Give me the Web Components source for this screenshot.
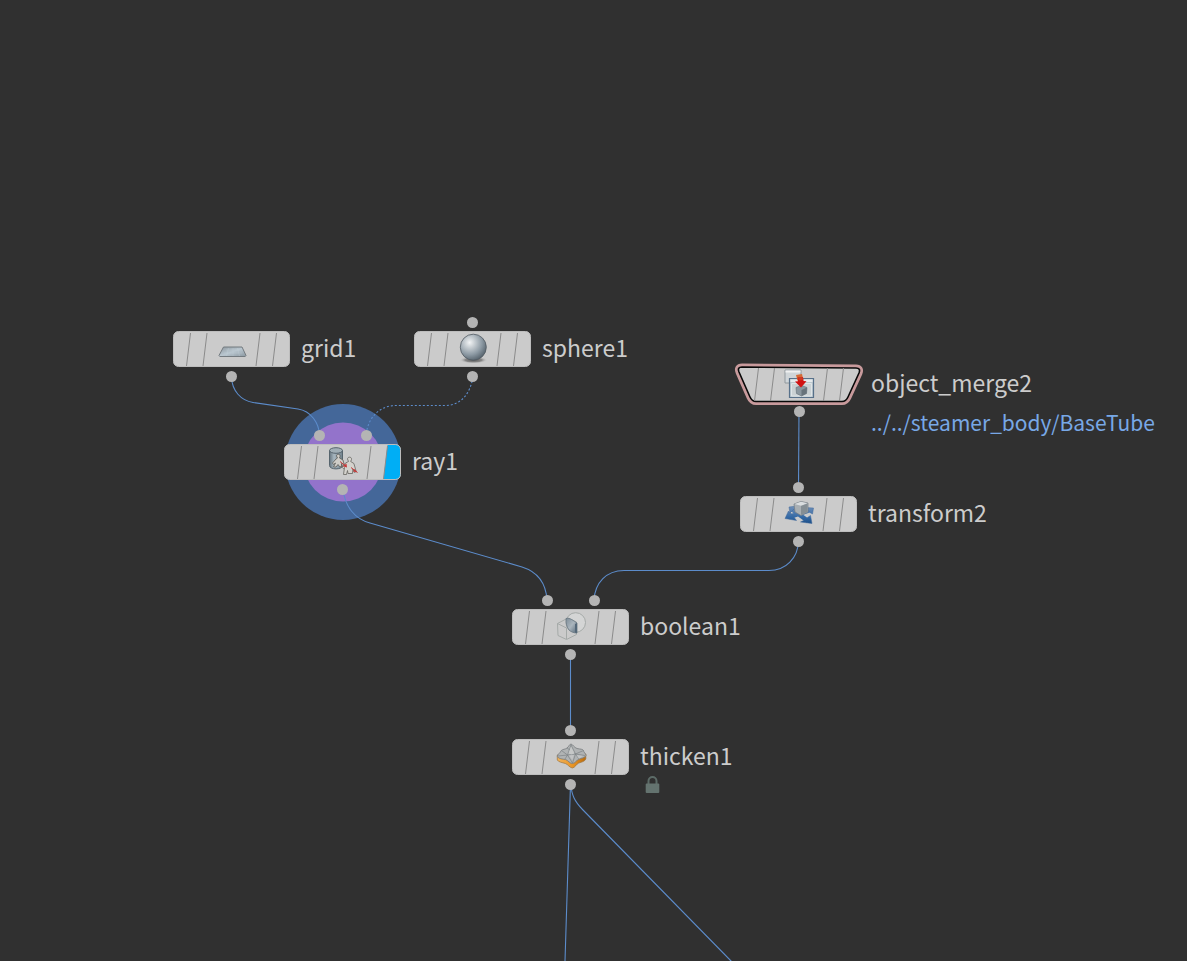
<!DOCTYPE html>
<html lang="en">
<head>
<meta charset="utf-8">
<title>Network editor</title>
<style>
html, body { margin: 0; min-height: 100vh; background: #303030; }
body { overflow: hidden; font-family: "Noto Sans CJK SC", "Noto Sans", sans-serif; color: #cccccc; }
graph-node { position: absolute; }
</style>
</head>
<body>
<node-canvas>
  <graph-wires></graph-wires>
  <graph-node style="left:173px;top:331px" inputs="0" icon="grid">grid1</graph-node>
  <graph-node style="left:414px;top:331px" inputs="1" icon="sphere">sphere1</graph-node>
  <graph-node style="left:284px;top:444px" inputs="2" icon="ray" display>ray1</graph-node>
  <graph-node style="left:735px;top:363px" inputs="0" icon="merge" shape="trapezoid">object_merge2<span slot="note">../../steamer_body/BaseTube</span></graph-node>
  <graph-node style="left:740px;top:496px" inputs="1" icon="transform">transform2</graph-node>
  <graph-node style="left:512px;top:609px" inputs="2" icon="boolean">boolean1</graph-node>
  <graph-node style="left:512px;top:739px" inputs="1" icon="thicken">thicken1<lock-badge slot="note"></lock-badge></graph-node>
</node-canvas>

<script>
const ICONS = {
  grid: `<defs><linearGradient id="g" x2="1" y2="1"><stop stop-color="#8d979e"/><stop offset=".5" stop-color="#b9c6cf"/><stop offset="1" stop-color="#8b98a1"/></linearGradient></defs>
    <path d="M7.5 13H26l4 8.5-.8 1H3.8L3 21.5z" fill="url(#g)" stroke="#737a7f"/><path d="M10 16h14M8 19h18M12.500 14l-2 8M17 14v8M21.500 14l2 8" stroke="#c6d2da" stroke-width=".5" opacity=".6"/>`,
  sphere: `<defs><radialGradient id="g" cx=".36" cy=".32" r=".72"><stop stop-color="#f2f4f5"/><stop offset=".3" stop-color="#c3cacf"/><stop offset=".65" stop-color="#8d9aa4"/><stop offset="1" stop-color="#56636d"/></radialGradient>
    <radialGradient id="s"><stop stop-color="#555"/><stop offset=".6" stop-color="#777" stop-opacity=".8"/><stop offset="1" stop-color="#ccc" stop-opacity="0"/></radialGradient></defs>
    <ellipse cx="16.500" cy="26" rx="14" ry="3.500" fill="url(#s)"/><circle cx="16.300" cy="13.200" r="13" fill="url(#g)" stroke="#525b62" stroke-width=".8"/>`,
  ray: `<defs><linearGradient id="g"><stop stop-color="#66757f"/><stop offset=".35" stop-color="#a7b6bf"/><stop offset="1" stop-color="#71818c"/></linearGradient></defs>
    <path d="M2.500 3.500v15c0 4.500 13 4.500 13 0v-15z" fill="url(#g)" stroke="#56646d"/><ellipse cx="9" cy="3.500" rx="6.500" ry="2.800" fill="#a1afb6" stroke="#56646d"/>
    <path d="M9.500 9c0-2.500 4-2.500 3.500.500l-.5 1.500 3.500 2 1.500 6-2 .5-1-3 .2 3.500-2.200-.5-1.500-2-2 2.500-2.500 0 2-4-2 1.500-1-1.500 3.500-4 1.500-1z" fill="#cfcdc8" stroke="#5b5a55" stroke-width=".8"/>
    <path d="M20.500 12c0-2.500 4.500-2.500 4 .5l-.8 2 3.200 2 2.300 8-1.800 1-1.500-3.500-.4 4.500h-4.500l-.5-3-1 4h-3l1-7-1 1.200-1.200-1.200 3.200-4.500 3-1.500z" fill="#d4d2cd" stroke="#66655f" stroke-width=".8"/>
    <path d="M13 14.500l5.500 4.500M24 20.500l6.500 5" stroke="#c43a3a" stroke-width="1"/><path d="M19.500 16.500l.5 4-4.300-1.200zM27.500 22l-1.400 2.500 4 .8z" fill="#c43a3a"/>`,
  merge: `<path d="M1 4h16v13H1z" fill="#d0d5d8" stroke="#90989d"/><path d="M1.500 4.500h15v2h-15z" fill="#f0f0f0"/>
    <path d="M5.500 12.500h24v19h-24z" fill="#bcc8ce" stroke="#58718a" stroke-width="1.200"/><path d="M6.500 13.500h22v2.500h-22z" fill="#e6eaec"/><path d="M7.500 17.500h20v12.500h-20z" fill="#cbd2d4" stroke="#dfe5e8"/>
    <path d="M12 21.500l5.500-2 5.500 2-.5 6-5 2.500-5-2.500z" fill="#8b979f" stroke="#647078" stroke-width=".6"/><path d="M17.500 24v6l5-2.500 .5-6z" fill="#67737b"/>
    <path d="M12 9l6-1 1.500 6.500h-6z" fill="#d56a35"/><path d="M13.500 11.500l5.500-.5.500 4 3 .3-5.500 6.200-6-6 3-.3z" fill="#d11313"/><path d="M14 11l4.500 0 .5 3-4.500.5z" fill="#cf3921"/>`,
  transform: `<defs><linearGradient id="g" gradientUnits="userSpaceOnUse" x1="0" y1="7" x2="0" y2="25"><stop stop-color="#7391b8"/><stop offset=".6" stop-color="#356aa6"/><stop offset="1" stop-color="#1b4d86"/></linearGradient></defs>
    <path d="M8.500 10L25 22M6 18L27 11" stroke="url(#g)" stroke-width="4.500"/>
    <path d="M6 8l8-1-7 7zM2 19.500L5.500 12l2.500 2.500 4 5 1.500 2zM29 24.500L17.500 23l3-1.500 4-3 3-2zM30.500 9l-9-.5 2.500 2 3 3 2.500 1.500z" fill="url(#g)" stroke="#41689a" stroke-width=".5"/>
    <path d="M11 5l7-2.500 7 1.500v9l-7 3.500-6-3.500z" fill="#a9afb3" stroke="#747d84" stroke-width=".7"/><path d="M11.500 5l6.500-2.300 6.500 1.500-6.500 2.500z" fill="#dadddf"/><path d="M18 7l6.500-2.500V13L18 16z" fill="#858e94"/>`,
  boolean: `<defs><linearGradient id="g" x2="1" y2="1"><stop stop-color="#7e8d98"/><stop offset=".5" stop-color="#aab5bd"/><stop offset="1" stop-color="#566979"/></linearGradient></defs>
    <g fill="none" stroke="#a5aaa8"><circle cx="20.700" cy="10.500" r="9.800" fill="#d4d5d5"/><path d="M2.500 11.500L13 6l8.500 4v12.500L11.500 27.500 3 23.500zM2.500 11.500l9 4.500 9.500-5M11.500 16v11"/></g>
    <path d="M11 6.500c4-1 7 2 11 4.500v10c-3 0-6-1-8-3-2.500-3-3-7-3-11.500z" fill="url(#g)" stroke="#677681" stroke-width=".8"/><path d="M20 12l2-1v10l-2-.5z" fill="#536778"/>`,
  thicken: `<defs><linearGradient id="g"><stop stop-color="#f1b35a"/><stop offset=".55" stop-color="#e99424"/><stop offset="1" stop-color="#b96b0d"/></linearGradient></defs>
    <path d="M2.300 13v5c1 2 5 2.500 8 3.500 3 1 4 4 7 4.500 3-.5 4-4 6.500-5 3-1 6-1.500 7-4v-5z" fill="url(#g)" stroke="#9b7441" stroke-width=".7"/>
    <path d="M16 2c2 .5 3 3.500 6 4.500 3 .7 6 .5 6.500 2 0 2 2.500 3 2.500 5-1 2.500-5 2.500-7.500 4-2.500 1-3 3.500-6 4-3 0-4-3-7-4-3-.5-6.500-.5-8.200-3 0-2.500 3.200-3.500 4-6 1.500-1.500 4-1 5.700-2.500C14 4.500 14 2.500 16 2z" fill="#b0b3b4" stroke="#777b7e" stroke-width=".8"/>
    <path d="M6.500 8.500l6 4.500L16 3l4.500 9 8-3.500M3 14l9.500-1 5 8 3-9 9.500 1.500M10 17l2.500-4 8-1L24 17M12 6l8.500 6" fill="none" stroke="#7c8285" stroke-width=".7"/><path d="M13.500 11.500l2.500-7 3.500 7-3 1z" fill="#c6c8c8"/><path d="M21.500 13l6.500 1-4 2.500zM14 13.500l5-.5-1.700 5z" fill="#c2c4c5"/>`
};

class NodeCanvas extends HTMLElement {
  constructor() {
    super();
    this.attachShadow({mode: "open"}).innerHTML = `<style>
      :host { display: block; position: relative; min-height: 100vh; overflow: hidden; background: #303030; }
    </style><slot></slot>`;
  }
}

class GraphWires extends HTMLElement {
  constructor() {
    super();
    this.attachShadow({mode: "open"}).innerHTML = `<style>
      :host { display: block; position: absolute; inset: 0; }
      svg { display: block; width: 100%; height: 100%; overflow: visible; }
      .wires { fill: none; stroke: #5c8ccb; stroke-width: 1.1; }
    </style>
    <svg aria-hidden="true">
      <circle cx="343" cy="462" r="58" fill="#446799"/>
      <circle cx="343" cy="462" r="39.500" fill="#9373cb"/>
      <g class="wires">
        <path d="M231.500 377C232 391 241 400.500 253 402.500L298 409C311 411 319 423 319.500 435"/>
        <path d="M473 377C470 394 461 405.500 445 405.500H396C380 405.500 368 417 366 435" stroke-dasharray="2 2"/>
        <path d="M343 489C345 507 355 519 370 523L522 567C538 572 546 584 547 600"/>
        <path d="M799 411L798.500 487"/>
        <path d="M798.500 541C798 558 786 570.500 769 570.500H624C606 570.500 595 583 594 600"/>
        <path d="M570.500 654V730"/>
        <path d="M570.500 784L565 961L561 1090"/>
        <path d="M570.500 784C572 795 574 801 583 810L731 961L860 1092"/>
      </g>
    </svg>`;
  }
}

class LockBadge extends HTMLElement {
  constructor() {
    super();
    this.attachShadow({mode: "open"}).innerHTML = `<style>
      :host { display: block; padding: 1px 0 0 5px; }
      svg { display: block; }
    </style>
    <svg width="15" height="18" viewBox="0 0 15 18" role="img" aria-label="Locked">
      <path d="M3.500 8V5a4 4 0 0 1 8 0v3" fill="none" stroke="#5c6b67" stroke-width="2"/>
      <rect x=".7" y="7.500" width="13.600" height="9.500" rx="1" fill="#64736f"/>
    </svg>`;
  }
}

class GraphNode extends HTMLElement {
  constructor() {
    super();
    this.attachShadow({mode: "open"});
  }
  connectedCallback() {
    const trapezoid = this.getAttribute("shape") === "trapezoid";
    const flag = this.hasAttribute("display")
      ? `<path d="M103.500 1H112a4.500 4.500 0 0 1 4.500 4.500V30.500a4.500 4.500 0 0 1-4.500 4.500H99.500z" fill="#00aef5"/>` : "";
    const outline = "M7 4L121 5Q126 5 124 10L113 34Q111 38.500 107 38.500H21Q17 38.500 15 34L4 9Q2 4 7 4z";
    const body = trapezoid
      ? `<svg class="body" width="128" height="42" viewBox="0 0 128 42">
          <path d="${outline}" stroke="#c89a9c" stroke-width="7" stroke-linejoin="round"/>
          <path d="${outline}" fill="#cbcbcb" stroke="#080808" stroke-width="1.600"/>
          <path d="M23.500 5L19.500 38M39.500 5L35.500 38M92.500 5L88.500 38M108.500 5L104.500 38" stroke="#8b8b8b"/></svg>`
      : `<svg class="body" width="117" height="36" viewBox="0 0 117 36">
          <rect x=".5" y=".5" width="116" height="35" rx="5" fill="#cbcbcb"/>${flag}
          <path d="M17.500 2L13.500 35M34 2L30 35M87 2L83 35M103.500 2L99.500 35" stroke="#8b8b8b"/>
          <rect x=".5" y=".5" width="116" height="35" rx="5" fill="none" stroke="#bdbdbd"/></svg>`;
    const mid = trapezoid ? 64 : 58;
    const inputs = {0: [], 1: [mid], 2: [35, 82]}[this.getAttribute("inputs")];
    this.shadowRoot.innerHTML = `<style>
      :host { display: grid; grid-template-columns: auto auto; column-gap: ${trapezoid ? 8 : 11}px; align-items: center; white-space: nowrap; }
      .tile { position: relative; }
      .body, .icon { display: block; }
      .body { overflow: visible; }
      .icon { position: absolute; left: ${trapezoid ? 49 : 43}px; top: 3px; overflow: visible; }
      .port { position: absolute; width: 11px; height: 11px; margin-left: -5px; border-radius: 50%; background: #b4b4b4; }
      .in { top: -14px; }
      .out { top: ${trapezoid ? 43 : 40}px; }
      .label { font-size: 23px; line-height: 30px; padding-bottom: 5px; }
      .note { grid-column: 2; font-size: 21px; line-height: 34px; color: #78a8e6; }
    </style>
    <div class="tile">${body}
      <svg class="icon" width="31" height="30" viewBox="0 0 31 30" fill="none" aria-hidden="true">${ICONS[this.getAttribute("icon")]}</svg>
      ${inputs.map(x => `<span class="port in" style="left:${x}px"></span>`).join("")}
      <span class="port out" style="left:${mid}px"></span>
    </div>
    <div class="label"><slot></slot></div>
    <div class="note"><slot name="note"></slot></div>`;
  }
}
customElements.define("node-canvas", NodeCanvas);
customElements.define("graph-wires", GraphWires);
customElements.define("lock-badge", LockBadge);
customElements.define("graph-node", GraphNode);
</script>
</body>
</html>
